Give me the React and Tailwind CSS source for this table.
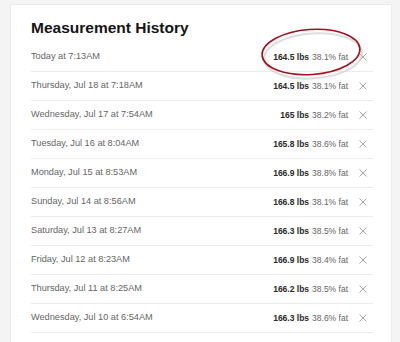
import React from 'react';

const rows = [
  ['Today at 7:13AM', '164.5 lbs', '38.1% fat'],
  ['Thursday, Jul 18 at 7:18AM', '164.5 lbs', '38.1% fat'],
  ['Wednesday, Jul 17 at 7:54AM', '165 lbs', '38.2% fat'],
  ['Tuesday, Jul 16 at 8:04AM', '165.8 lbs', '38.6% fat'],
  ['Monday, Jul 15 at 8:53AM', '166.9 lbs', '38.8% fat'],
  ['Sunday, Jul 14 at 8:56AM', '166.8 lbs', '38.1% fat'],
  ['Saturday, Jul 13 at 8:27AM', '166.3 lbs', '38.5% fat'],
  ['Friday, Jul 12 at 8:23AM', '166.9 lbs', '38.4% fat'],
  ['Thursday, Jul 11 at 8:25AM', '166.2 lbs', '38.5% fat'],
  ['Wednesday, Jul 10 at 6:54AM', '166.3 lbs', '38.6% fat'],
];

function CloseIcon() {
  return (
    <svg width="8" height="8" viewBox="0 0 8 8" className="shrink-0">
      <path d="M0.5 0.5L7.5 7.5M7.5 0.5L0.5 7.5" stroke="#a9a9a9" strokeWidth="1" />
    </svg>
  );
}

export default function App() {
  return (
    <div
      className="relative w-[400px] h-[342px] overflow-hidden bg-[#f4f4f4] pl-[10px] pt-[4px] pr-[8px]"
      style={{ fontFamily: '"Liberation Sans", Arial, sans-serif' }}
    >
      <div className="h-[400px] bg-white border border-[#ebebeb] pl-[20px] pr-[18px] pt-[13px]">
        <h1 className="text-[15.5px] leading-[20px] font-bold text-[#151515]">Measurement History</h1>
        <ul className="mt-[5px]">
          {rows.map(([date, weight, fat]) => (
            <li key={date} className="h-[29px] flex items-center border-b border-[#ececec]">
              <span className="flex-1 text-[9.2px] text-[#666]">{date}</span>
              <span className="text-[8.5px] text-[#2a2a2a] font-bold">{weight}</span>
              <span className="text-[8.5px] text-[#666] ml-[3px]">{fat}</span>
              <span className="ml-[11px] mr-[6px] flex items-center">
                <CloseIcon />
              </span>
            </li>
          ))}
        </ul>
      </div>

      {/* hand-drawn highlight around today's reading */}
      <svg className="absolute left-[255px] top-[22px] pointer-events-none" width="115" height="62" viewBox="0 0 115 62">
        <ellipse cx="57" cy="32" rx="49" ry="22.5" fill="none" stroke="#c8c8c8" strokeWidth="2" transform="rotate(-4 57 32) translate(1 2)" opacity="0.6" />
        <ellipse cx="56" cy="30" rx="49" ry="22.5" fill="none" stroke="#a3121f" strokeWidth="1.6" transform="rotate(-4 56 30)" />
      </svg>
    </div>
  );
}
